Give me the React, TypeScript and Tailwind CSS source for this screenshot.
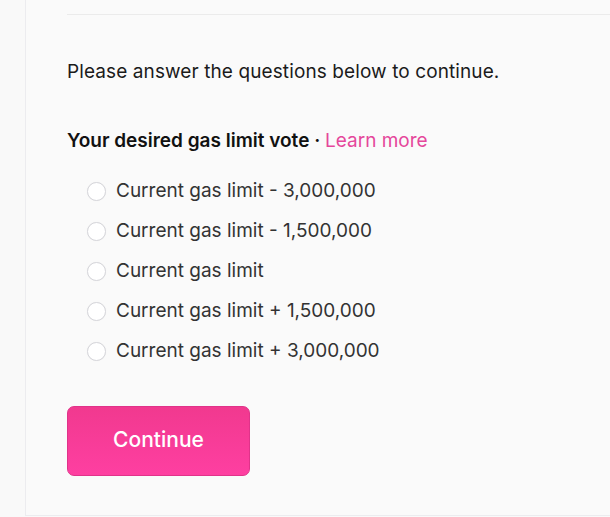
export default function App() {
  const options = [
    "Current gas limit - 3,000,000",
    "Current gas limit - 1,500,000",
    "Current gas limit",
    "Current gas limit + 1,500,000",
    "Current gas limit + 3,000,000",
  ]

  return (
    <div className="w-[610px] h-[517px] overflow-hidden bg-[#f9f9f9] flex font-['Inter',sans-serif]">
      <div className="w-[25px] shrink-0" />
      <div className="flex-1 h-[516px] border-l border-b border-[#ececef] bg-[#fafafa] pl-[41px]">
        <div className="h-[15px] border-b border-[#ebebeb]" />

        <p className="mt-[45px] text-[19px] leading-[24px] text-[#1b1b1b] tracking-[0.1px]">
          Please answer the questions below to continue.
        </p>

        <h3 className="mt-[45px] text-[19px] leading-[24px] font-semibold text-[#111]">
          Your desired gas limit vote · <a className="font-normal text-[#e5479b]">Learn more</a>
        </h3>

        <div className="mt-[18px] flex flex-col pl-[20px]">
          {options.map((opt) => (
            <label key={opt} className="flex items-center h-[40px] gap-[10px]">
              <span className="w-[19px] h-[19px] rounded-full border-[1.5px] border-[#d6d6db] bg-white shadow-[0_0_1px_rgba(0,0,0,0.08)]" />
              <span className="text-[19px] text-[#333]">{opt}</span>
            </label>
          ))}
        </div>

        <button className="mt-[35px] w-[183px] h-[70px] rounded-[7px] border border-[#e0338a] bg-gradient-to-b from-[#f1398f] to-[#fe3fa1] text-white text-[21px] font-medium pb-[3px]">
          Continue
        </button>
      </div>
    </div>
  )
}
